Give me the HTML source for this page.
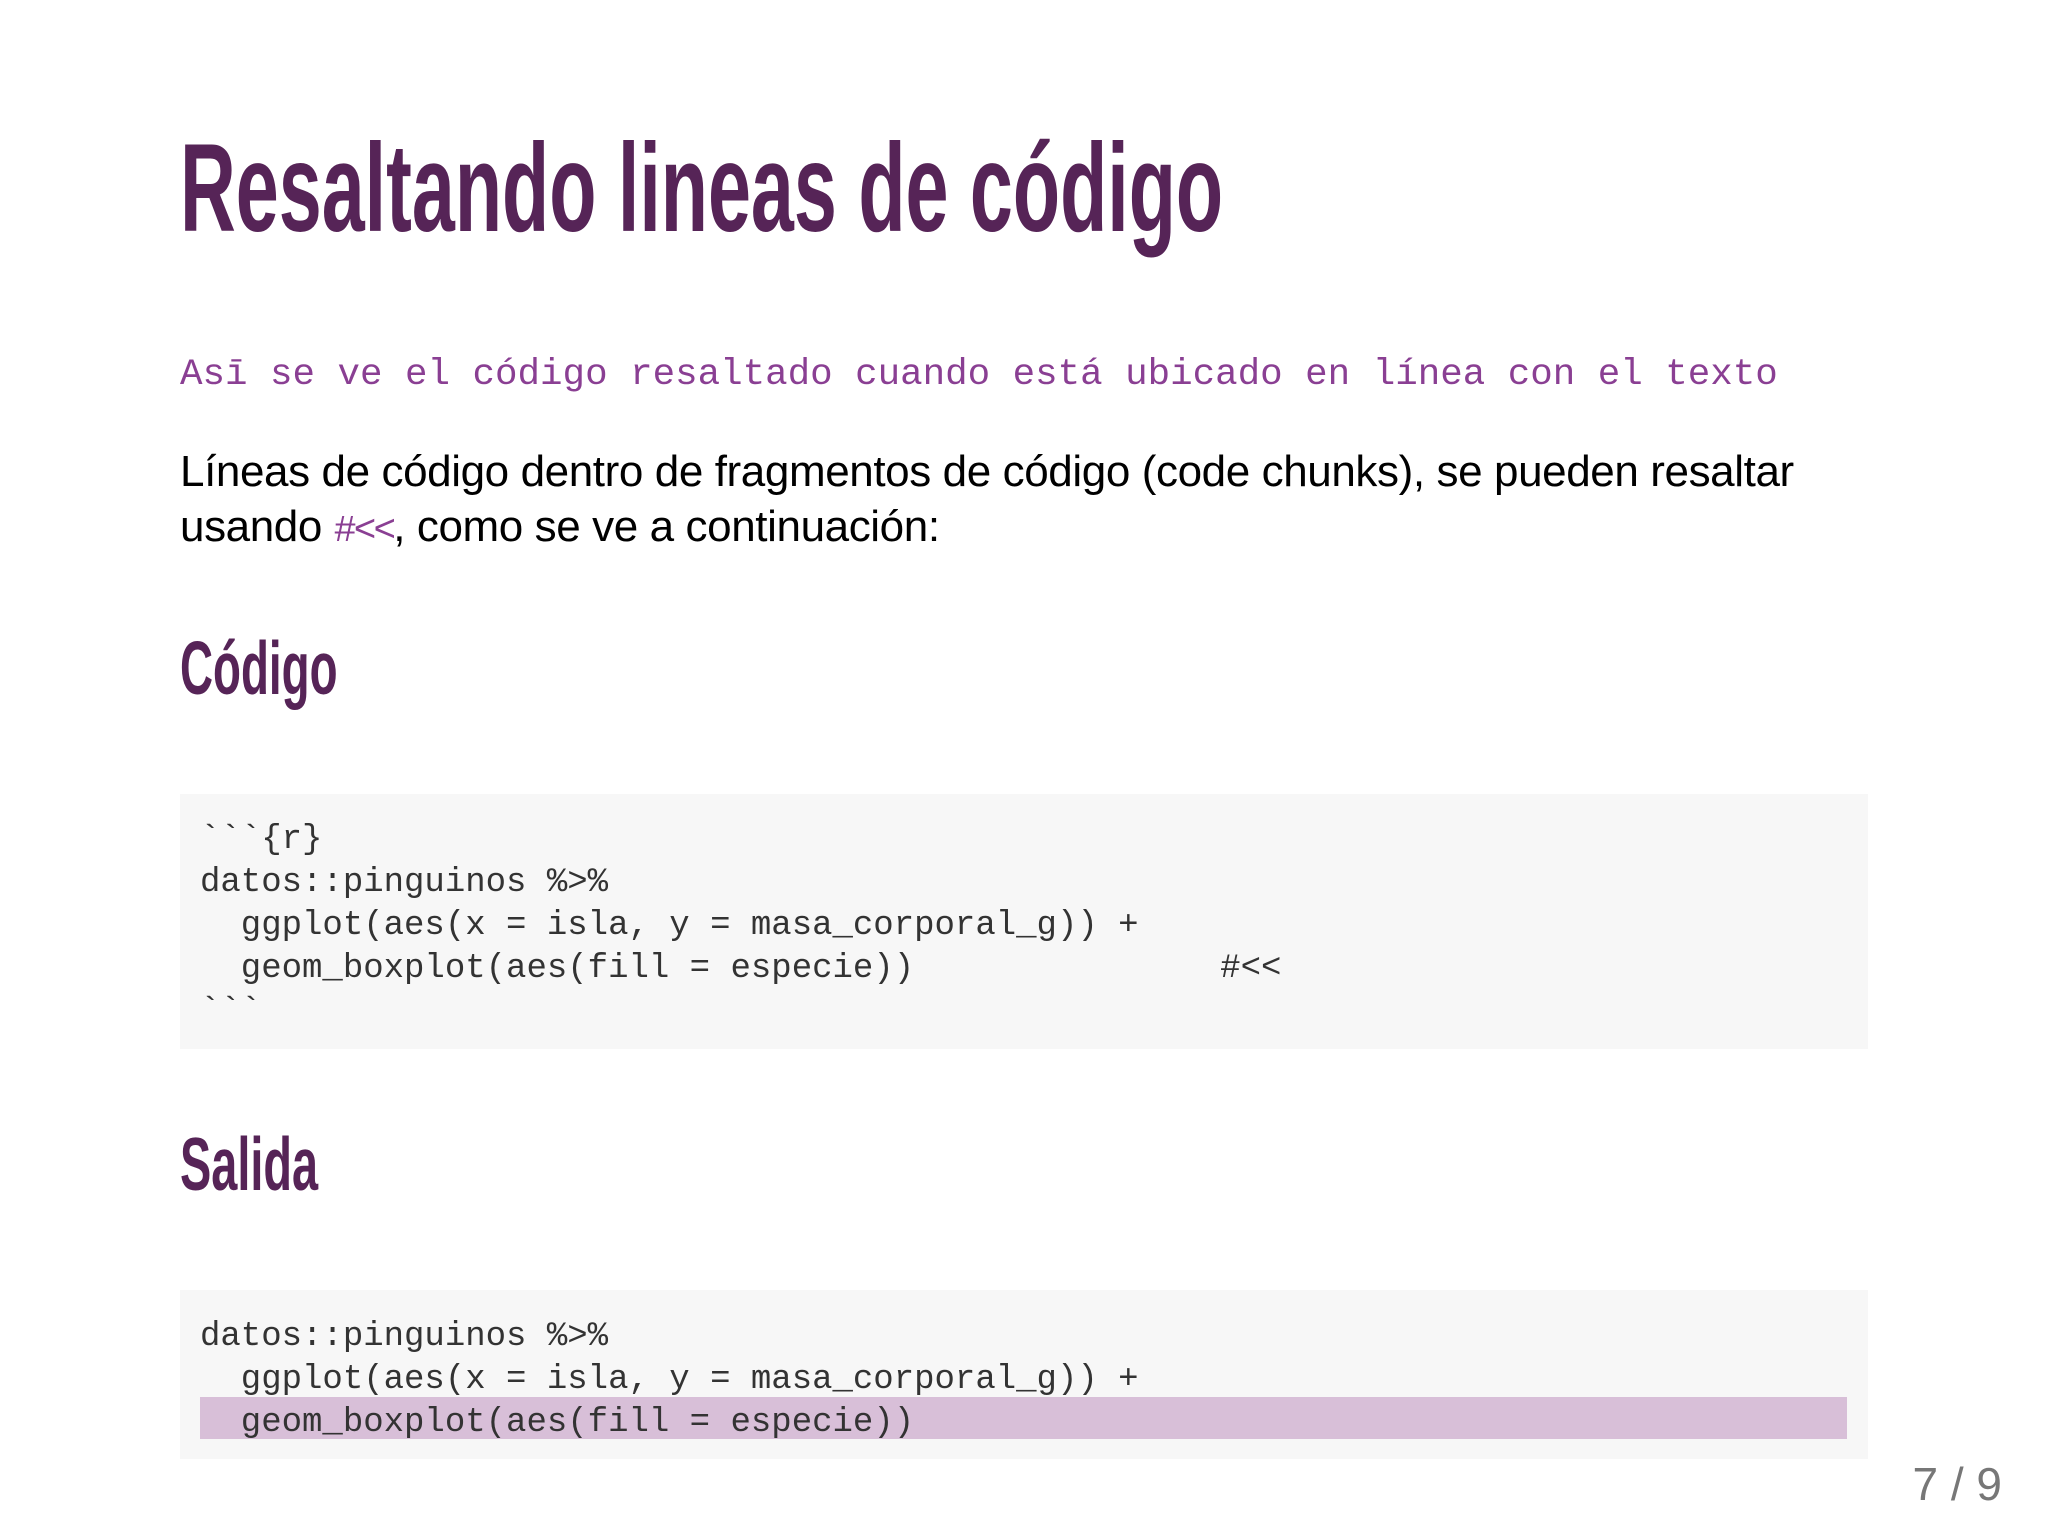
<!DOCTYPE html>
<html><head><meta charset="utf-8"><style>
html,body{margin:0;padding:0;background:#fff;width:2048px;height:1536px;overflow:hidden;position:relative}
.a{position:absolute;white-space:pre;margin:0}
.t{font-family:"Liberation Sans",sans-serif;font-weight:bold;color:#562457;transform-origin:0 0}
.m{font-family:"Liberation Mono",monospace}
.box{position:absolute;left:180px;width:1688px;background:#f7f7f7}
.code{font-family:"Liberation Mono",monospace;font-size:34px;line-height:43px;color:#333}
</style></head><body>
<div class="a t" style="left:180px;top:126px;font-size:125px;line-height:125px;transform:scaleX(0.618)">Resaltando lineas de código</div>
<div class="a m" style="left:180px;top:350px;font-size:37.5px;line-height:50px;color:#8a3f93">Asī se ve el código resaltado cuando está ubicado en línea con el texto</div>
<div class="a" style="left:180px;top:444px;font-family:'Liberation Sans',sans-serif;font-size:44px;line-height:55px;color:#000;letter-spacing:-0.4px">Líneas de código dentro de fragmentos de código (code chunks), se pueden resaltar
usando <span class="m" style="color:#8a3f93;font-size:38px;letter-spacing:-3px">#&lt;&lt;</span>, como se ve a continuación:</div>
<div class="a t" style="left:180px;top:631px;font-size:75px;line-height:75px;transform:scaleX(0.61)">Código</div>
<div class="box" style="top:794px;height:255px"></div>
<div class="a code" style="left:200px;top:819px">&#96;&#96;&#96;{r}
datos::pinguinos %&gt;%
  ggplot(aes(x = isla, y = masa_corporal_g)) +
  geom_boxplot(aes(fill = especie))               #&lt;&lt;
&#96;&#96;&#96;</div>
<div class="a t" style="left:180px;top:1127px;font-size:75px;line-height:75px;transform:scaleX(0.625)">Salida</div>
<div class="box" style="top:1290px;height:169px"></div>
<div style="position:absolute;left:200px;top:1397px;width:1647px;height:42px;background:#d8bfd8"></div>
<div class="a code" style="left:200px;top:1316px">datos::pinguinos %&gt;%
  ggplot(aes(x = isla, y = masa_corporal_g)) +
  geom_boxplot(aes(fill = especie))</div>
<div class="a" style="right:46px;top:1462px;font-family:'Liberation Sans',sans-serif;font-size:46px;line-height:44px;color:#777">7 / 9</div>
</body></html>
